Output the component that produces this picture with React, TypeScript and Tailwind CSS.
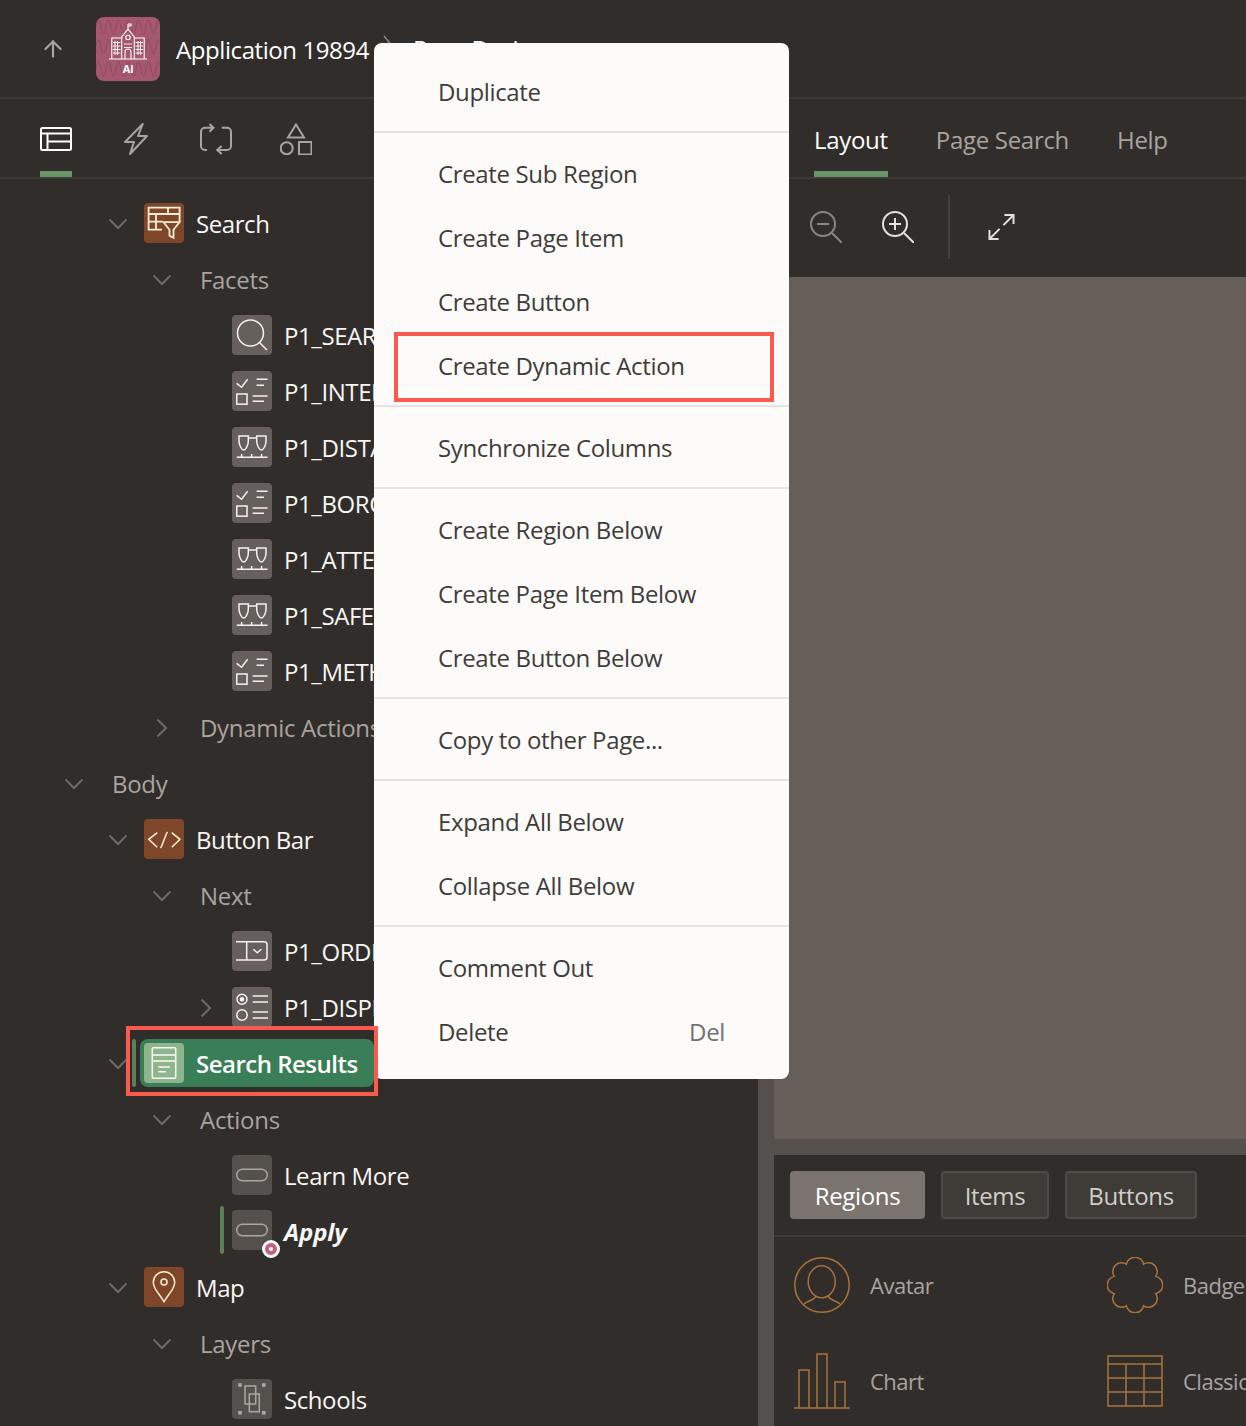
import type { ReactNode } from "react";
import { ArrowUp } from "lucide-react";

const Tile = ({ tone, children }: { tone: "gray" | "dim" | "brown" | "green"; children: ReactNode }) => {
    const bg = { gray: "bg-[#665f5b]", dim: "bg-[#55504c]", brown: "bg-[#7f4629]", green: "bg-[#8fb58d]" }[tone];
    return (
        <svg viewBox="0 0 40 40" fill="none" stroke="currentColor" strokeWidth="1.5" className={`w-10 h-10 shrink-0 rounded-[4px] ${bg}`}>
            {children}
        </svg>
    );
};

const SearchItem = () => (
    <Tile tone="gray">
        <g className="text-[#f4f2f0]"><circle cx="18.5" cy="18" r="13" /><path d="M27.5 27.5 35 35" /></g>
    </Tile>
);
const CheckItem = () => (
    <Tile tone="gray">
        <g className="text-[#f4f2f0]"><path d="M4.6 12.3l5 4 6-8M24.6 8.3h11M24.6 14.3H32M20.6 25h15M20.6 30.3H32" /><rect x="4.8" y="23" width="10.2" height="10.2" /></g>
    </Tile>
);
const RangeItem = () => (
    <Tile tone="gray">
        <g className="text-[#f4f2f0]">
            <path d="M7 9h9.3v5c0 4-2.5 9-4.6 9S7 18 7 14zM24.7 9H34v5c0 4-2.5 9-4.6 9s-4.7-5-4.7-9zM16.3 11h8.4M4.7 30.3h30.9M9.6 27v3.3M19.6 27v3.3M29.6 27v3.3" />
        </g>
    </Tile>
);
const SelectItem = () => (
    <Tile tone="gray">
        <g className="text-[#f4f2f0]"><path d="M4 10.7h28a3 3 0 0 1 3 3V26a3 3 0 0 1-3 3H4M14.7 10.7V29M21.3 18.3l4 3.4 4-3.4" /></g>
    </Tile>
);
const RadioItem = () => (
    <Tile tone="gray">
        <g className="text-[#f4f2f0]">
            <circle cx="10" cy="12.3" r="5" /><circle cx="10" cy="12.3" r="1.6" fill="currentColor" /><circle cx="10" cy="28" r="5.2" />
            <path d="M20.7 9H36M20.7 15H36M20.7 25H36M20.7 31H36" />
        </g>
    </Tile>
);
const ButtonItem = () => (
    <Tile tone="dim">
        <rect x="4.7" y="14.3" width="30.6" height="11.4" rx="5.7" className="text-[#aaa6a2]" />
    </Tile>
);
const LayerItem = () => (
    <Tile tone="dim">
        <g className="text-[#aaa6a2]">
            <rect x="13" y="7" width="10.7" height="18" /><rect x="17.3" y="15" width="10" height="17.7" />
            <g fill="currentColor" stroke="none"><rect x="6.2" y="4.2" width="3.6" height="3.6" /><rect x="30" y="4.2" width="3.6" height="3.6" /><rect x="6.2" y="32" width="3.6" height="3.6" /><rect x="30" y="32" width="3.6" height="3.6" /></g>
        </g>
    </Tile>
);
const FacetRegion = () => (
    <Tile tone="brown">
        <g className="text-[#fdeed6]" strokeWidth="1.8">
            <path d="M18 26.6H4.6V4.6h31v14M4.6 11h31M4.6 18.7h14M12 11v15.6M24 4.6V11" />
            <path d="M19.5 19.2h16l-6 7.6v8l-4-2v-6z" />
        </g>
    </Tile>
);
const CodeRegion = () => (
    <Tile tone="brown">
        <path d="M13.3 13.7l-8.6 6.6 8.6 8M23.3 12.7l-6.6 16.6M27.7 13.7l8.3 6.6-8.3 8" className="text-[#fdeed6]" />
    </Tile>
);
const MapRegion = () => (
    <Tile tone="brown">
        <g className="text-[#fdeed6]">
            <path d="M20 34.7C16 27.5 9.3 22 9.3 15.4a10.7 10.7 0 0 1 21.4 0C30.7 22 24 27.5 20 34.7z" /><circle cx="20" cy="15" r="3" />
        </g>
    </Tile>
);
const ResultsRegion = () => (
    <Tile tone="green">
        <g className="text-[#fbfaf8]"><rect x="8.3" y="4.7" width="23.4" height="30.6" rx="1" /><path d="M8.3 12h23.4M8.3 18h23.4M14.3 24h11.7M14.3 28.7h7.5" /></g>
    </Tile>
);

const ChevronDown = ({ className }: { className?: string }) => (
    <svg viewBox="0 0 20 12" fill="none" stroke="#6e6964" strokeWidth="2" className={`w-5 h-3 ${className ?? ""}`}><path d="M1.5 1.5 10 10l8.5-8.5" /></svg>
);
const ChevronRight = () => (
    <svg viewBox="0 0 12 20" fill="none" stroke="#6e6964" strokeWidth="2" className="w-3 h-5"><path d="M1.5 1.5 10 10l-8.5 8.5" /></svg>
);

type RowProps = {
    level: 0 | 1 | 2 | 3;
    open?: boolean;
    closed?: boolean;
    icon?: ReactNode;
    label: string;
    group?: boolean;
    marked?: boolean;
    apply?: boolean;
};

const indent = ["pl-[52px]", "pl-[96px]", "pl-[140px]", "pl-[184px]"];

const Row = ({ level, open, closed, icon, label, group, marked, apply }: RowProps) => (
    <div className={`flex items-center h-14 shrink-0 ${indent[level]}`}>
        <div className={`w-11 h-12 flex items-center shrink-0 ${marked ? "justify-end pr-1 -translate-y-[2px]" : "justify-center"}`}>
            {open && <ChevronDown />}
            {closed && <ChevronRight />}
            {marked && <div className="w-1 h-12 rounded-full bg-[#5d7f59]" />}
        </div>
        {icon ? (
            <div className={`relative ml-1 mr-3 ${apply ? "-translate-y-[2px]" : "-translate-y-px"}`}>
                {icon}
                {apply && (
                    <div className="absolute -right-2 -bottom-2 w-[18px] h-[18px] rounded-full bg-[#c65f82] border-[3px] border-white flex items-center justify-center">
                        <div className="w-1 h-1 rounded-full bg-white" />
                    </div>
                )}
            </div>
        ) : (
            <div className="w-4" />
        )}
        <span className={`text-2xl whitespace-nowrap ${group ? "text-[#a8a4a0] tracking-[-0.3px]" : "text-[#f7f6f4]"} ${apply ? "italic font-bold tracking-[-0.1px]" : "font-medium"} ${!group && !apply ? "tracking-[-0.42px]" : ""}`}>{label}</span>
    </div>
);

const Menu = ({ items, first, last }: { items: string[]; first?: boolean; last?: boolean }) => (
    <div className={`${first ? "pt-[17px]" : "pt-[9px]"} ${last ? "pb-[15px]" : "pb-[7px] border-b-2 border-[#e6e4e2]"}`}>
        {items.map((item) => (
            <div key={item} className="h-16 flex items-center justify-between pl-16 pr-16 text-2xl text-[#3f3c39] whitespace-nowrap">
                <span>{item}</span>
                {item === "Delete" && <span className="text-[#757170]">Del</span>}
            </div>
        ))}
    </div>
);

const badgePath = () => {
    const pts = Array.from({ length: 8 }, (_, i) => {
        const a = (i * Math.PI) / 4 - Math.PI / 8;
        return [28 + 22.5 * Math.cos(a), 28 + 22.5 * Math.sin(a)];
    });
    return `M${pts[0][0]} ${pts[0][1]}` + pts.map((_, i) => {
        const p = pts[(i + 1) % 8];
        return `A8.8 8.8 0 0 1 ${p[0]} ${p[1]}`;
    }).join("") + "Z";
};

const GalleryItem = ({ label, children }: { label: string; children: ReactNode }) => (
    <div className="flex items-center gap-5 h-14 text-[22px] font-medium tracking-[-0.5px] text-[#a8a4a0] whitespace-nowrap">
        <svg viewBox="0 0 56 56" fill="none" stroke="#a8743c" strokeWidth="1.5" className="w-14 h-14 shrink-0">{children}</svg>
        <span>{label}</span>
    </div>
);

const Logo = () => (
    <svg viewBox="0 0 64 64" fill="none" className="w-16 h-16 rounded-lg shrink-0 bg-[#a5586f]">
        <g stroke="#924c64" strokeWidth="1.2">
            {[10, 30, 52].map((y) => (
                <path key={y} d={`M0 ${y}q2.5-14 5 0t5 0 5 0 5 0 5 0 5 0 5 0 5 0 5 0 5 0 5 0 5 0 5 0`} />
            ))}
        </g>
        <g stroke="#fff" strokeWidth="1.1">
            <path d="M13 42h38M32 7v4.3M32 7h3v2h-3M25.7 42V20L32 12l6.3 8v22M25.7 21h-9.9v21M38.3 21h9.9v21M29 42v-7a3 3 0 0 1 6 0v7" />
            <circle cx="32" cy="20.5" r="2.2" />
            <path strokeWidth="0.9" d="M17 25.5h7.5M17 29h7.5M17 32.5h7.5M17 36h7.5M39.5 25.5H47M39.5 29H47M39.5 32.5H47M39.5 36H47M19 24v14M21.5 24v14M42 24v14M44.5 24v14M28 27h8M28 30.5h8" />
        </g>
        <text x="32" y="56" textAnchor="middle" fill="#fff" fontSize="11" fontWeight="700">AI</text>
    </svg>
);

export default function App() {
    return (
        <div className="relative w-[1246px] h-[1426px] overflow-hidden flex flex-col bg-[#312d2a] font-['Open_Sans',sans-serif] tracking-[-0.35px]">
            {/* header */}
            <div className="h-[99px] shrink-0 flex items-center border-b-2 border-[#3f3b37] pt-px">
                <ArrowUp size={26} strokeWidth={2} className="ml-10 text-[#a8a4a0]" />
                <div className="ml-[30px]"><Logo /></div>
                <span className="ml-4 mt-[2px] text-2xl font-medium tracking-[-0.42px] text-white whitespace-nowrap">Application 19894</span>
                <svg viewBox="0 0 12 24" fill="none" stroke="#8a8580" strokeWidth="1.5" className="w-3 h-6 ml-[14px] -mt-1"><path d="M1 1l9 11-9 11" /></svg>
                <span className="ml-[18px] text-2xl font-medium tracking-[-0.42px] text-white whitespace-nowrap">Page Designer</span>
            </div>

            <div className="flex flex-1 min-h-0">
                {/* left: tree */}
                <div className="w-[758px] shrink-0 flex flex-col overflow-hidden">
                    <div className="h-20 shrink-0 flex gap-12 pl-10 border-b-2 border-[#3f3b37]">
                        <div className="w-8 h-full flex flex-col items-center justify-between border-b-[6px] border-[#6a9568] pt-[28px]">
                            <svg viewBox="0 0 32 24" fill="none" stroke="#fff" strokeWidth="2" className="w-8 h-6"><rect x="1" y="1" width="30" height="22" rx="1.5" /><path d="M1 6.5h30M7.5 6.5V23M7.5 14.5H31" /></svg>
                        </div>
                        <div className="w-8 pt-6">
                            <svg viewBox="0 0 24 32" fill="none" stroke="#a8a4a0" strokeWidth="2" className="w-6 h-8 ml-1"><path d="M18.7 1 1 19h9L6 31l17-18h-9z" strokeLinejoin="round" /></svg>
                        </div>
                        <div className="w-8 pt-6">
                            <svg viewBox="0 0 32 32" fill="none" stroke="#a8a4a0" strokeWidth="2" className="w-8 h-8"><path d="M13.5 4.7H5a4 4 0 0 0-4 4V23a4 4 0 0 0 4 4h2M9.5 1l4 3.7-4 4M21.7 4.7H27a4 4 0 0 1 4 4V23a4 4 0 0 1-4 4H17M21.7 23l-4.5 4 4.5 4" /></svg>
                        </div>
                        <div className="w-8 pt-6">
                            <svg viewBox="0 0 32 32" fill="none" stroke="#a8a4a0" strokeWidth="2" className="w-8 h-8"><path d="M16 1.5 24 14.5H8z" /><circle cx="6.7" cy="25.3" r="6" /><rect x="19" y="19" width="12.5" height="12.5" /></svg>
                        </div>
                    </div>
                    <div className="flex flex-col pt-[17px]">
                        <Row level={1} open icon={<FacetRegion />} label="Search" />
                        <Row level={2} open label="Facets" group />
                        <Row level={3} icon={<SearchItem />} label="P1_SEARCH" />
                        <Row level={3} icon={<CheckItem />} label="P1_INTERNET" />
                        <Row level={3} icon={<RangeItem />} label="P1_DISTANCE" />
                        <Row level={3} icon={<CheckItem />} label="P1_BOROUGH" />
                        <Row level={3} icon={<RangeItem />} label="P1_ATTENDANCE" />
                        <Row level={3} icon={<RangeItem />} label="P1_SAFETY" />
                        <Row level={3} icon={<CheckItem />} label="P1_METHOD" />
                        <Row level={2} closed label="Dynamic Actions" group />
                        <Row level={0} open label="Body" group />
                        <Row level={1} open icon={<CodeRegion />} label="Button Bar" />
                        <Row level={2} open label="Next" group />
                        <Row level={3} icon={<SelectItem />} label="P1_ORDER_BY" />
                        <Row level={3} closed icon={<RadioItem />} label="P1_DISPLAY" />
                        <div className="flex items-center h-14 shrink-0 pl-[108px]">
                            <ChevronDown />
                            <div className="w-1 h-12 ml-1 -translate-y-px rounded-full bg-[#5d7f59]" />
                            <div className="w-[234px] h-12 ml-1 pl-1 -translate-y-px flex items-center gap-3 rounded-lg bg-[#3a7e58] text-2xl font-semibold tracking-[-0.5px] text-white whitespace-nowrap">
                                <ResultsRegion />
                                <span className="translate-y-px">Search Results</span>
                            </div>
                        </div>
                        <Row level={2} open label="Actions" group />
                        <Row level={3} icon={<ButtonItem />} label="Learn More" />
                        <Row level={3} marked apply icon={<ButtonItem />} label="Apply" />
                        <Row level={1} open icon={<MapRegion />} label="Map" />
                        <Row level={2} open label="Layers" group />
                        <Row level={3} icon={<LayerItem />} label="Schools" />
                    </div>
                </div>

                {/* splitter */}
                <div className="w-4 shrink-0 bg-[#55504c]" />

                {/* right: layout */}
                <div className="flex-1 min-w-0 flex flex-col">
                    <div className="-ml-4 h-20 shrink-0 flex gap-12 pl-14 pr-4 border-b-2 border-[#3f3b37] bg-[#312d2a] text-2xl font-medium tracking-[-0.3px] text-[#a8a4a0]">
                        <div className="h-full flex items-center pt-[10px] border-b-[6px] border-[#6a9568] text-white">Layout</div>
                        <div className="h-full flex items-center pt-[10px] pb-[6px]">Page Search</div>
                        <div className="h-full flex items-center pt-[10px] pb-[6px]">Help</div>
                    </div>
                    <div className="-ml-4 h-[98px] shrink-0 flex items-center pl-[52px] pb-[2px] bg-[#312d2a]">
                        <svg viewBox="0 0 32 32" fill="none" stroke="#8a8580" strokeWidth="2" className="w-8 h-8"><circle cx="13" cy="13" r="12" /><path d="M7 13h12M22 22l10 10" /></svg>
                        <svg viewBox="0 0 32 32" fill="none" stroke="#e4e2e0" strokeWidth="2" className="w-8 h-8 ml-10"><circle cx="13" cy="13" r="12" /><path d="M7 13h12M13 7v12M22 22l10 10" /></svg>
                        <div className="w-[2px] h-16 ml-[34px] bg-[#45413d]" />
                        <svg viewBox="0 0 28 28" fill="none" stroke="#e4e2e0" strokeWidth="2" className="w-[27px] h-7 ml-[38px]"><path d="M17 1.5h9.5V11M26.5 1.5 16 12M1.5 17v9.5H11M1.5 26.5 12 16" /></svg>
                    </div>
                    <div className="h-[862px] shrink-0 bg-[#665f59]" />
                    <div className="h-4 shrink-0 bg-[#55504c]" />
                    <div className="flex-1 min-h-0 overflow-hidden">
                        <div className="h-[82px] flex gap-4 pl-4 pt-4 border-b-2 border-[#3f3b37] text-2xl font-medium tracking-[-0.35px]">
                            <div className="h-12 w-[135px] flex items-center justify-center pt-px rounded-[4px] bg-[#7a736e] text-white">Regions</div>
                            <div className="h-12 w-[108px] flex items-center justify-center pt-px rounded-[4px] border-2 border-[#4f4b47] bg-[#3f3b37] text-[#d0cecb]">Items</div>
                            <div className="h-12 w-[132px] flex items-center justify-center pt-px rounded-[4px] border-2 border-[#4f4b47] bg-[#3f3b37] text-[#d0cecb]">Buttons</div>
                        </div>
                        <div className="grid grid-cols-[313px_313px] gap-y-10 pl-5 pt-5">
                            <GalleryItem label="Avatar">
                                <circle cx="28" cy="28" r="27.2" />
                                <ellipse cx="27.7" cy="24.7" rx="13.5" ry="16" />
                                <path d="M10 47c3-3 11-4 12-8M46 47c-3-3-11-4-12-8" />
                            </GalleryItem>
                            <GalleryItem label="Badge"><path d={badgePath()} /></GalleryItem>
                            <GalleryItem label="Chart">
                                <path d="M0 55h56M5 55V17h10v38M23 55V1h10v54M41 55V29h10v26" />
                            </GalleryItem>
                            <GalleryItem label="Classic Report">
                                <rect x="1" y="3" width="54" height="50" /><path d="M1 11h54M1 25h54M1 39h54M19 11v42M37 11v42" />
                            </GalleryItem>
                        </div>
                    </div>
                </div>
            </div>

            {/* context menu */}
            <div className="absolute left-[374px] top-[43px] w-[415px] rounded-lg bg-[#fcfbf9]">
                <Menu first items={["Duplicate"]} />
                <Menu items={["Create Sub Region", "Create Page Item", "Create Button", "Create Dynamic Action"]} />
                <Menu items={["Synchronize Columns"]} />
                <Menu items={["Create Region Below", "Create Page Item Below", "Create Button Below"]} />
                <Menu items={["Copy to other Page..."]} />
                <Menu items={["Expand All Below", "Collapse All Below"]} />
                <Menu last items={["Comment Out", "Delete"]} />
            </div>

            {/* callouts */}
            <div className="absolute left-[394px] top-[332px] w-[380px] h-[70px] border-4 border-[#fb5a4e]" />
            <div className="absolute left-[126px] top-[1026px] w-[252px] h-[70px] border-4 border-[#fb5a4e]" />
        </div>
    );
}
